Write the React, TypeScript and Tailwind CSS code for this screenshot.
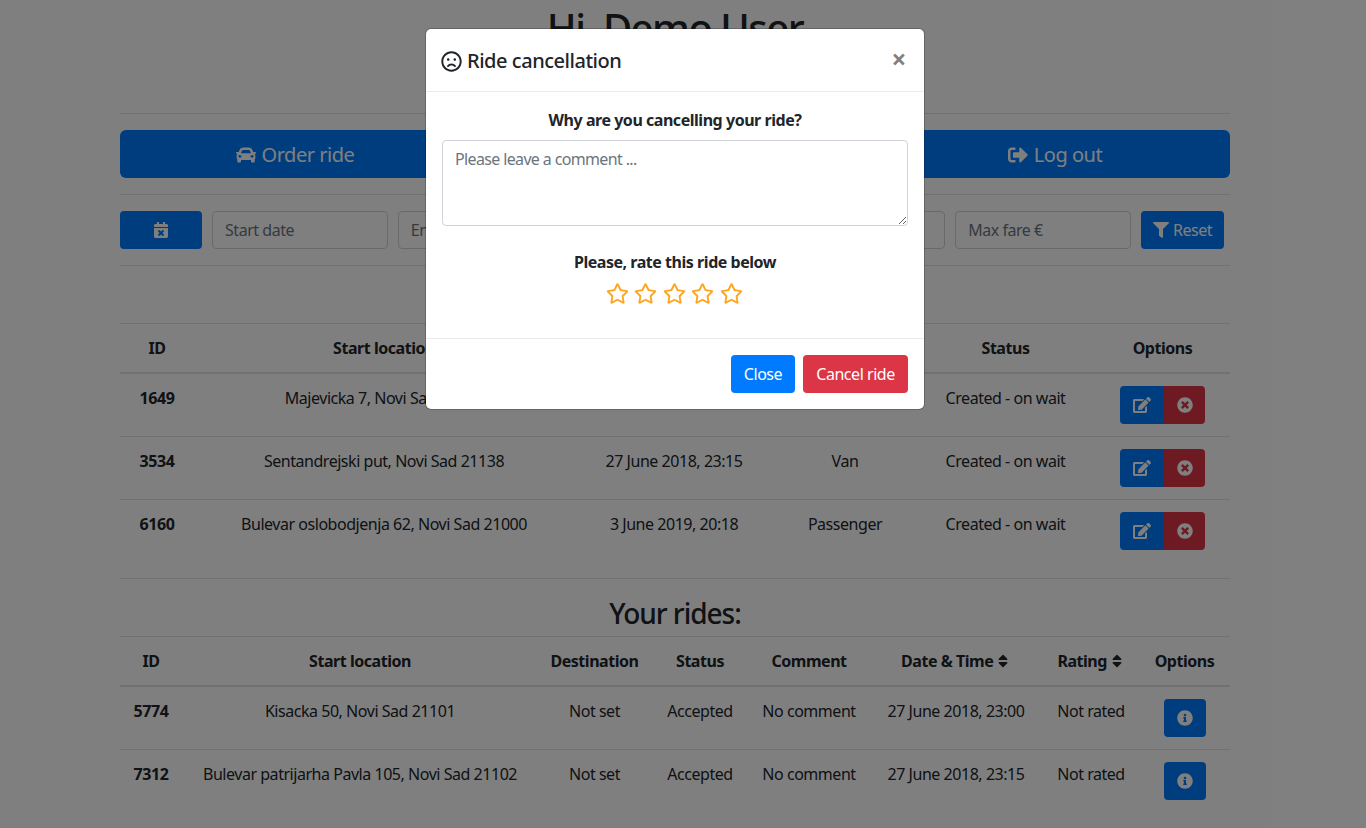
import {
  FaCalendarTimes,
  FaCar,
  FaEdit,
  FaFilter,
  FaInfoCircle,
  FaRegFrown,
  FaRegStar,
  FaSignOutAlt,
  FaSort,
  FaTimesCircle,
  FaUser,
} from "react-icons/fa";

const requests = [
  { id: 1649, start: "Majevicka 7, Novi Sad 21000", date: "27 June 2018, 23:00", type: "Passenger" },
  { id: 3534, start: "Sentandrejski put, Novi Sad 21138", date: "27 June 2018, 23:15", type: "Van" },
  { id: 6160, start: "Bulevar oslobodjenja 62, Novi Sad 21000", date: "3 June 2019, 20:18", type: "Passenger" },
];

const rides = [
  { id: 5774, start: "Kisacka 50, Novi Sad 21101", date: "27 June 2018, 23:00" },
  { id: 7312, start: "Bulevar patrijarha Pavla 105, Novi Sad 21102", date: "27 June 2018, 23:15" },
];

const th = "h-[51px] border-t border-b-2 border-[#dee2e6] px-3 text-center align-middle font-bold";
const td = "border-[#dee2e6] px-3 pt-3 text-center align-top";
const input = "h-[38px] w-[175.8px] rounded border border-[#ced4da] px-3 placeholder:text-[#6c757d]";

// first body row sits under the thick header border, so it has no line of its own
function rowCell(i: number) {
  return i === 0 ? `${td} h-[62px]` : `${td} h-[63px] border-t`;
}

export default function App() {
  return (
    <div className="relative h-screen overflow-hidden bg-white font-['Noto_Sans',sans-serif] text-base tracking-[-0.029em] text-[#212529]">
      <div className="pr-4">
        <div className="mx-auto w-[1110px]">
          <h1 className="h-[113px] pt-1 text-center text-[40px] font-medium leading-[48px] tracking-[-0.0375em]">Hi, Demo User</h1>
          <hr className="border-[#dee2e6]" />

          <div className="mt-4 grid grid-cols-3 gap-[30px]">
            <button className="flex h-12 items-center justify-center gap-1.5 rounded-md bg-[#007bff] pt-px text-xl text-white">
              <FaCar /> Order ride
            </button>
            <button className="flex h-12 items-center justify-center gap-1.5 rounded-md bg-[#007bff] pt-px text-xl text-white">
              <FaUser /> Profile
            </button>
            <button className="flex h-12 items-center justify-center gap-1.5 rounded-md bg-[#007bff] pt-px text-xl text-white">
              <FaSignOutAlt /> Log out
            </button>
          </div>
          <hr className="mt-4 border-[#dee2e6]" />

          <div className="mt-4 flex gap-2.5">
            <button className="flex h-[38px] w-[82px] items-center justify-center rounded bg-[#007bff] text-white">
              <FaCalendarTimes />
            </button>
            <input className={input} placeholder="Start date" />
            <input className={input} placeholder="End date" />
            <input className={input} placeholder="Min fare €" />
            <input className={input} placeholder="Passengers" />
            <input className={input} placeholder="Max fare €" />
            <button className="flex h-[38px] w-[83px] items-center justify-center gap-1 rounded bg-[#007bff] text-white">
              <FaFilter /> Reset
            </button>
          </div>
          <hr className="mt-4 border-[#dee2e6]" />

          <h2 className="h-[57px] pt-3 text-center text-[28px] font-medium leading-[34px] tracking-[-0.0365em]">Requests:</h2>

          <table className="w-full table-fixed border-separate border-spacing-0">
            <thead>
              <tr>
                <th className={`${th} w-[74px]`}>ID</th>
                <th className={`${th} w-[380px]`}>Start location</th>
                <th className={`${th} w-[200px]`}>Date &amp; Time</th>
                <th className={`${th} w-[142px]`}>Type</th>
                <th className={`${th} w-[179px]`}>Status</th>
                <th className={`${th} w-[135px]`}>Options</th>
              </tr>
            </thead>
            <tbody>
              {requests.map((r, i) => (
                <tr key={r.id}>
                  <td className={`${rowCell(i)} font-bold`}>{r.id}</td>
                  <td className={rowCell(i)}>{r.start}</td>
                  <td className={rowCell(i)}>{r.date}</td>
                  <td className={rowCell(i)}>{r.type}</td>
                  <td className={`${rowCell(i)} whitespace-nowrap`}>Created - on wait</td>
                  <td className={rowCell(i)}>
                    <div className="flex justify-center">
                      <button className="flex h-[38px] w-[44px] items-center justify-center rounded-l bg-[#007bff] text-white">
                        <FaEdit size={18} />
                      </button>
                      <button className="flex h-[38px] w-[41px] items-center justify-center rounded-r bg-[#dc3545] text-white">
                        <FaTimesCircle />
                      </button>
                    </div>
                  </td>
                </tr>
              ))}
            </tbody>
          </table>

          <hr className="mt-4 border-[#dee2e6]" />
          <h2 className="h-[57px] pt-[17px] text-center text-[28px] font-medium leading-[34px] tracking-[-0.0365em]">Your rides:</h2>

          <table className="w-full table-fixed border-separate border-spacing-0">
            <thead>
              <tr>
                <th className={`${th} w-[62px]`}>ID</th>
                <th className={`${th} w-[356px]`}>Start location</th>
                <th className={`${th} w-[113px] whitespace-nowrap`}>Destination</th>
                <th className={`${th} w-[98px]`}>Status</th>
                <th className={`${th} w-[120px]`}>Comment</th>
                <th className={`${th} w-[174px] whitespace-nowrap`}>
                  Date &amp; Time <FaSort className="-ml-0.5 inline align-[-2px]" />
                </th>
                <th className={`${th} w-[96px] whitespace-nowrap`}>
                  Rating <FaSort className="-ml-0.5 inline align-[-2px]" />
                </th>
                <th className={th}>Options</th>
              </tr>
            </thead>
            <tbody>
              {rides.map((r, i) => (
                <tr key={r.id}>
                  <td className={`${rowCell(i)} font-bold`}>{r.id}</td>
                  <td className={`${rowCell(i)} whitespace-nowrap`}>{r.start}</td>
                  <td className={rowCell(i)}>Not set</td>
                  <td className={rowCell(i)}>Accepted</td>
                  <td className={`${rowCell(i)} whitespace-nowrap`}>No comment</td>
                  <td className={`${rowCell(i)} whitespace-nowrap`}>{r.date}</td>
                  <td className={`${rowCell(i)} whitespace-nowrap`}>Not rated</td>
                  <td className={rowCell(i)}>
                    <div className="flex justify-center">
                      <button className="flex h-[38px] w-[42px] items-center justify-center rounded bg-[#007bff] text-white">
                        <FaInfoCircle />
                      </button>
                    </div>
                  </td>
                </tr>
              ))}
            </tbody>
          </table>
        </div>
      </div>

      <div className="absolute inset-0 flex items-start justify-center bg-black/50 pr-4 pt-7">
        <div className="w-[500px] rounded-md border border-black/20 bg-white bg-clip-padding">
          <div className="flex h-[63px] items-center justify-between border-b border-[#e9ecef] pl-[15px] pr-4">
            <h5 className="flex items-center gap-[5px] pt-0.5 text-xl font-medium">
              <FaRegFrown size={21} /> Ride cancellation
            </h5>
            <button className="pb-0.5 pr-0.5 text-[26px] font-bold leading-none text-black/50">×</button>
          </div>
          <div className="h-[246px] p-4 text-center">
            <div className="font-bold leading-6">Why are you cancelling your ride?</div>
            <textarea
              className="mt-2 block h-[86px] w-full rounded border border-[#ced4da] px-3 py-1.5 tracking-[-0.04em] placeholder:text-[#6c757d]"
              placeholder="Please leave a comment ..."
            />
            <div className="mt-6 font-bold leading-6">Please, rate this ride below</div>
            <div className="mt-2 flex justify-center gap-[5.5px] pr-0.5 text-[23px] text-[#ffa51f]">
              <FaRegStar />
              <FaRegStar />
              <FaRegStar />
              <FaRegStar />
              <FaRegStar />
            </div>
          </div>
          <div className="flex justify-end gap-2 border-t border-[#e9ecef] p-4">
            <button className="h-[38px] w-16 rounded bg-[#007bff] text-white">Close</button>
            <button className="h-[38px] w-[105px] rounded bg-[#dc3545] text-white">Cancel ride</button>
          </div>
        </div>
      </div>
    </div>
  );
}
